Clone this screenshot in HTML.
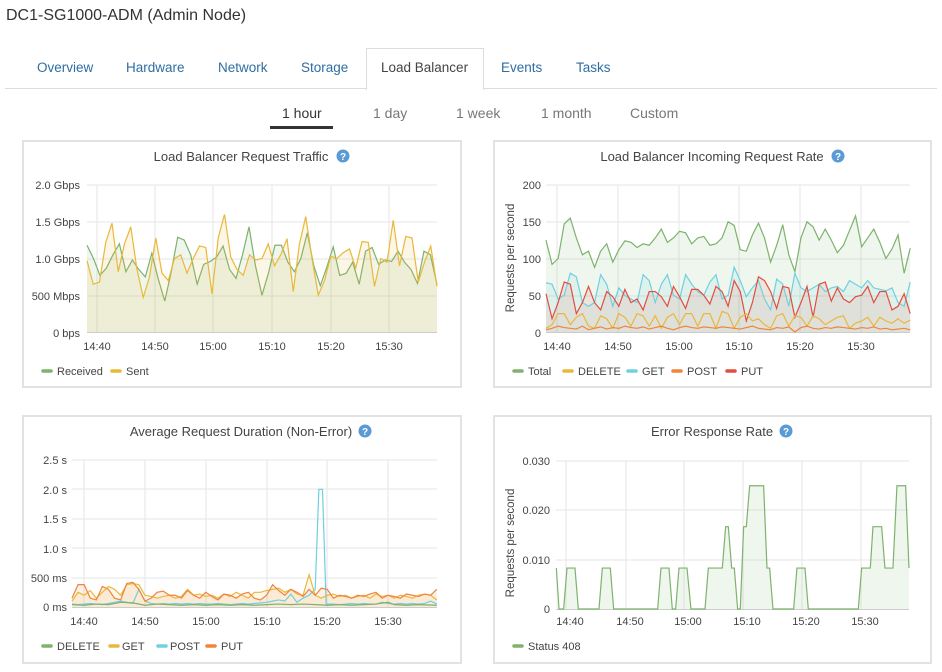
<!DOCTYPE html>
<html><head><meta charset="utf-8"><style>
body{margin:0;width:942px;height:672px;background:#fff;font-family:"Liberation Sans",sans-serif;position:relative;overflow:hidden}
.t{position:absolute;white-space:nowrap}
</style></head><body>
<div class="t" style="left:6px;top:7px;font-size:16px;color:#333">DC1-SG1000-ADM (Admin Node)</div>
<div style="position:absolute;left:5px;top:88px;width:932px;height:1px;background:#ddd"></div>
<div style="position:absolute;left:366px;top:48px;width:116px;height:41px;border:1px solid #ddd;border-bottom:none;background:#fff"></div>
<div class="t" style="left:37px;top:60px;font-size:13.5px;color:#2d6ea3">Overview</div>
<div class="t" style="left:126px;top:60px;font-size:13.5px;color:#2d6ea3">Hardware</div>
<div class="t" style="left:218px;top:60px;font-size:13.5px;color:#2d6ea3">Network</div>
<div class="t" style="left:301px;top:60px;font-size:13.5px;color:#2d6ea3">Storage</div>
<div class="t" style="left:381px;top:60px;font-size:13.5px;color:#444">Load Balancer</div>
<div class="t" style="left:501px;top:60px;font-size:13.5px;color:#2d6ea3">Events</div>
<div class="t" style="left:576px;top:60px;font-size:13.5px;color:#2d6ea3">Tasks</div>
<div class="t" style="left:282px;top:105px;font-size:14px;color:#333">1 hour</div>
<div style="position:absolute;left:270px;top:126px;width:63px;height:3px;background:#333"></div>
<div class="t" style="left:373px;top:105px;font-size:14px;color:#777">1 day</div>
<div class="t" style="left:456px;top:105px;font-size:14px;color:#777">1 week</div>
<div class="t" style="left:541px;top:105px;font-size:14px;color:#777">1 month</div>
<div class="t" style="left:630px;top:105px;font-size:14px;color:#777">Custom</div>

<svg width="942" height="672" style="position:absolute;left:0;top:0" font-family="Liberation Sans, sans-serif">
<g fill="#fff" stroke="#e2e2e2" stroke-width="2">
<rect x="23" y="141" width="438" height="246"/><rect x="494" y="141" width="437" height="246"/>
<rect x="23" y="416" width="438" height="247"/><rect x="494" y="416" width="437" height="247"/>
</g>
<g font-size="13" fill="#444" text-anchor="middle">
<text x="241" y="161">Load Balancer Request Traffic</text>
<text x="712" y="161">Load Balancer Incoming Request Rate</text>
<text x="241" y="436">Average Request Duration (Non-Error)</text>
<text x="712" y="436">Error Response Rate</text>
</g>
<g fill="#5b9bd5"><circle cx="343" cy="156" r="6.5"/><circle cx="838" cy="156" r="6.5"/><circle cx="365" cy="431" r="6.5"/><circle cx="786" cy="431" r="6.5"/></g>
<g fill="#fff" font-size="10" font-weight="bold" text-anchor="middle"><text x="343" y="160">?</text><text x="838" y="160">?</text><text x="365" y="435">?</text><text x="786" y="435">?</text></g>

<g stroke="#e6e6e6" stroke-width="1">
<path d="M87 185H437M87 222H437M87 259H437M87 296H437M97 185V332M155 185V332M213 185V332M272 185V332M331 185V332M389 185V332"/>
<path d="M546 185H910M546 222H910M546 259H910M546 296H910M557 185V332M618 185V332M679 185V332M739 185V332M800 185V332M861 185V332"/>
<path d="M72 460H437M72 489H437M72 519H437M72 548H437M72 578H437M84 460V607M145 460V607M206 460V607M267 460V607M327 460V607M388 460V607"/>
<path d="M556 461H909M556 510H909M556 560H909M566 461V609M626 461V609M684 461V609M743 461V609M802 461V609M861 461V609"/>
</g>
<g stroke="#ccc"><path d="M87 332.5H437M546 332.5H910M72 607.5H437M556 609.5H909"/></g>

<g font-size="11" fill="#444" text-anchor="end">
<text x="80" y="189">2.0 Gbps</text><text x="80" y="226">1.5 Gbps</text><text x="80" y="263">1.0 Gbps</text><text x="80" y="300">500 Mbps</text><text x="80" y="337">0 bps</text>
<text x="541" y="189">200</text><text x="541" y="226">150</text><text x="541" y="263">100</text><text x="541" y="300">50</text><text x="541" y="337">0</text>
<text x="67" y="464">2.5 s</text><text x="67" y="494">2.0 s</text><text x="67" y="523">1.5 s</text><text x="67" y="553">1.0 s</text><text x="67" y="582">500 ms</text><text x="67" y="611">0 ms</text>
<text x="550" y="465">0.030</text><text x="550" y="514">0.020</text><text x="550" y="564">0.010</text><text x="550" y="613">0</text>
</g>
<g font-size="11" fill="#444" text-anchor="middle">
<text x="97" y="350">14:40</text><text x="155" y="350">14:50</text><text x="213" y="350">15:00</text><text x="272" y="350">15:10</text><text x="331" y="350">15:20</text><text x="389" y="350">15:30</text>
<text x="557" y="350">14:40</text><text x="618" y="350">14:50</text><text x="679" y="350">15:00</text><text x="739" y="350">15:10</text><text x="800" y="350">15:20</text><text x="861" y="350">15:30</text>
<text x="84" y="625">14:40</text><text x="145" y="625">14:50</text><text x="206" y="625">15:00</text><text x="267" y="625">15:10</text><text x="327" y="625">15:20</text><text x="388" y="625">15:30</text>
<text x="570" y="625">14:40</text><text x="630" y="625">14:50</text><text x="688" y="625">15:00</text><text x="747" y="625">15:10</text><text x="806" y="625">15:20</text><text x="865" y="625">15:30</text>
</g>
<g font-size="11.5" fill="#444">
<text transform="translate(514,258) rotate(-90)" text-anchor="middle">Requests per second</text>
<text transform="translate(514,543) rotate(-90)" text-anchor="middle">Requests per second</text>
</g>

<g transform="translate(87,332) scale(6.48,-73.5)">
<polygon fill="#7eb26d" fill-opacity="0.12" points="0,0 0,1.18 1,1.0 2,0.77 3,0.87 4,1.05 5,1.2 6,0.82 7,0.98 8,0.85 9,0.75 10,1.07 11,0.72 12,0.42 13,0.82 14,1.29 15,1.25 16,1.05 17,0.65 18,0.92 19,0.96 20,1.02 21,1.17 22,0.85 23,0.73 24,1.05 25,1.43 26,0.9 27,0.5 28,0.8 29,1.18 30,1.18 31,0.95 32,0.82 33,1.0 34,1.35 35,0.9 36,0.63 37,0.88 38,1.16 39,0.77 40,0.8 41,0.95 42,0.65 43,1.1 44,1.15 45,0.92 46,0.98 47,0.96 48,1.1 49,0.95 50,0.85 51,0.66 52,1.1 53,1.05 54,0.65 54,0"/>
<polyline fill="none" stroke="#7eb26d" stroke-width="1.2" vector-effect="non-scaling-stroke" points="0,1.18 1,1.0 2,0.77 3,0.87 4,1.05 5,1.2 6,0.82 7,0.98 8,0.85 9,0.75 10,1.07 11,0.72 12,0.42 13,0.82 14,1.29 15,1.25 16,1.05 17,0.65 18,0.92 19,0.96 20,1.02 21,1.17 22,0.85 23,0.73 24,1.05 25,1.43 26,0.9 27,0.5 28,0.8 29,1.18 30,1.18 31,0.95 32,0.82 33,1.0 34,1.35 35,0.9 36,0.63 37,0.88 38,1.16 39,0.77 40,0.8 41,0.95 42,0.65 43,1.1 44,1.15 45,0.92 46,0.98 47,0.96 48,1.1 49,0.95 50,0.85 51,0.66 52,1.1 53,1.05 54,0.65"/>
</g>
<g transform="translate(87,332) scale(6.25,-73.5)">
<polygon fill="#eab839" fill-opacity="0.12" points="0,0 0,0.97 1,0.65 2,0.68 3,1.22 4,1.48 5,0.82 6,1.2 7,1.43 8,0.85 9,0.47 10,0.75 11,1.28 12,0.8 13,0.7 14,1.0 15,1.05 16,0.8 17,1.0 18,1.17 19,1.15 20,0.52 21,1.28 22,1.6 23,1.02 24,0.85 25,0.77 26,1.05 27,0.98 28,1.0 29,1.2 30,0.9 31,1.05 32,1.27 33,0.55 34,1.2 35,1.57 36,1.0 37,0.5 38,0.7 39,1.03 40,1.0 41,1.08 42,1.13 43,0.87 44,1.23 45,1.22 46,0.62 47,1.0 48,0.95 49,1.52 50,0.9 51,1.3 52,1.28 53,0.68 54,0.95 55,1.17 56,0.62 56,0"/>
<polyline fill="none" stroke="#eab839" stroke-width="1.2" vector-effect="non-scaling-stroke" points="0,0.97 1,0.65 2,0.68 3,1.22 4,1.48 5,0.82 6,1.2 7,1.43 8,0.85 9,0.47 10,0.75 11,1.28 12,0.8 13,0.7 14,1.0 15,1.05 16,0.8 17,1.0 18,1.17 19,1.15 20,0.52 21,1.28 22,1.6 23,1.02 24,0.85 25,0.77 26,1.05 27,0.98 28,1.0 29,1.2 30,0.9 31,1.05 32,1.27 33,0.55 34,1.2 35,1.57 36,1.0 37,0.5 38,0.7 39,1.03 40,1.0 41,1.08 42,1.13 43,0.87 44,1.23 45,1.22 46,0.62 47,1.0 48,0.95 49,1.52 50,0.9 51,1.3 52,1.28 53,0.68 54,0.95 55,1.17 56,0.62"/>
</g>

<g transform="translate(546,332) scale(6.07,-0.735)">
<polygon fill="#7eb26d" fill-opacity="0.12" points="0,0 0,125 1,92 2,100 3,147 4,155 5,128 6,105 7,110 8,88 9,110 10,120 11,95 12,112 13,124 14,122 15,115 16,120 17,118 18,128 19,140 20,122 21,128 22,137 23,135 24,120 25,128 26,130 27,118 28,120 29,128 30,150 31,145 32,112 33,110 34,132 35,148 36,128 37,95 38,118 39,146 40,105 41,82 42,128 43,150 44,143 45,125 46,140 47,125 48,108 49,118 50,138 51,158 52,116 53,128 54,140 55,122 56,100 57,113 58,132 59,80 60,114 60,0"/>
<polygon fill="#6ed0e0" fill-opacity="0.12" points="0,0 0,67 1,65 2,45 3,50 4,80 5,75 6,40 7,35 8,40 9,78 10,65 11,35 12,60 13,50 14,45 15,40 16,78 17,70 18,40 19,65 20,78 21,50 22,45 23,78 24,65 25,55 26,50 27,68 28,78 29,45 30,50 31,88 32,70 33,48 34,60 35,70 36,45 37,30 38,72 39,65 40,35 41,80 42,60 43,55 44,60 45,65 46,55 47,60 48,62 49,55 50,70 51,65 52,60 53,70 54,60 55,58 56,56 57,60 58,40 59,35 60,68 60,0"/>
<polygon fill="#e24d42" fill-opacity="0.1" points="0,0 0,52 1,18 2,40 3,68 4,65 5,25 6,40 7,62 8,40 9,30 10,55 11,48 12,35 13,58 14,40 15,45 16,30 17,55 18,55 19,48 20,35 21,62 22,48 23,32 24,58 25,58 26,50 27,38 28,62 29,55 30,35 31,70 32,55 33,15 34,40 35,75 36,70 37,55 38,32 39,62 40,60 41,20 42,40 43,62 44,20 45,65 46,68 47,42 48,60 49,45 50,40 51,48 52,50 53,62 54,40 55,55 56,55 57,30 58,35 59,52 60,25 60,0"/>
<polyline fill="none" stroke="#7eb26d" stroke-width="1.2" vector-effect="non-scaling-stroke" points="0,125 1,92 2,100 3,147 4,155 5,128 6,105 7,110 8,88 9,110 10,120 11,95 12,112 13,124 14,122 15,115 16,120 17,118 18,128 19,140 20,122 21,128 22,137 23,135 24,120 25,128 26,130 27,118 28,120 29,128 30,150 31,145 32,112 33,110 34,132 35,148 36,128 37,95 38,118 39,146 40,105 41,82 42,128 43,150 44,143 45,125 46,140 47,125 48,108 49,118 50,138 51,158 52,116 53,128 54,140 55,122 56,100 57,113 58,132 59,80 60,114"/>
<polyline fill="none" stroke="#6ed0e0" stroke-width="1.2" vector-effect="non-scaling-stroke" points="0,67 1,65 2,45 3,50 4,80 5,75 6,40 7,35 8,40 9,78 10,65 11,35 12,60 13,50 14,45 15,40 16,78 17,70 18,40 19,65 20,78 21,50 22,45 23,78 24,65 25,55 26,50 27,68 28,78 29,45 30,50 31,88 32,70 33,48 34,60 35,70 36,45 37,30 38,72 39,65 40,35 41,80 42,60 43,55 44,60 45,65 46,55 47,60 48,62 49,55 50,70 51,65 52,60 53,70 54,60 55,58 56,56 57,60 58,40 59,35 60,68"/>
<polyline fill="none" stroke="#e24d42" stroke-width="1.2" vector-effect="non-scaling-stroke" points="0,52 1,18 2,40 3,68 4,65 5,25 6,40 7,62 8,40 9,30 10,55 11,48 12,35 13,58 14,40 15,45 16,30 17,55 18,55 19,48 20,35 21,62 22,48 23,32 24,58 25,58 26,50 27,38 28,62 29,55 30,35 31,70 32,55 33,15 34,40 35,75 36,70 37,55 38,32 39,62 40,60 41,20 42,40 43,62 44,20 45,65 46,68 47,42 48,60 49,45 50,40 51,48 52,50 53,62 54,40 55,55 56,55 57,30 58,35 59,52 60,25"/>
<polyline fill="none" stroke="#eab839" stroke-width="1.2" vector-effect="non-scaling-stroke" points="0,5 1,10 2,25 3,25 4,10 5,20 6,25 7,8 8,5 9,22 10,18 11,5 12,25 13,20 14,8 15,25 16,22 17,8 18,22 19,5 20,20 21,25 22,10 23,25 24,25 25,8 26,25 27,25 28,5 29,28 30,25 31,5 32,20 33,25 34,15 35,18 36,10 37,5 38,22 39,25 40,8 41,22 42,20 43,8 44,22 45,18 46,10 47,15 48,20 49,22 50,5 51,12 52,15 53,20 54,8 55,20 56,15 57,12 58,18 59,12 60,16"/>
<polyline fill="none" stroke="#ef843c" stroke-width="1.2" vector-effect="non-scaling-stroke" points="0,3 1,5 2,8 3,6 4,5 5,4 6,8 7,3 8,5 9,7 10,4 11,6 12,5 13,8 14,6 15,5 16,7 17,4 18,6 19,8 20,5 21,3 22,6 23,8 24,6 25,5 26,7 27,6 28,5 29,7 30,6 31,5 32,4 33,6 34,8 35,5 36,4 37,3 38,6 39,5 40,7 41,0 42,6 43,8 44,5 45,4 46,6 47,5 48,7 49,6 50,5 51,4 52,6 53,5 54,7 55,4 56,5 57,3 58,4 59,5 60,3"/>
</g>

<g transform="translate(72,607) scale(6.08,-58.8)">
<polygon fill="#ef843c" fill-opacity="0.12" points="0,0 0,0.15 1,0.38 2,0.38 3,0.15 4,0.12 5,0.35 6,0.3 7,0.15 8,0.12 9,0.4 10,0.42 11,0.3 12,0.1 13,0.15 14,0.25 15,0.27 16,0.2 17,0.2 18,0.15 19,0.28 20,0.2 21,0.15 22,0.25 23,0.18 24,0.12 25,0.22 26,0.2 27,0.15 28,0.22 29,0.25 30,0.15 31,0.12 32,0.2 33,0.38 34,0.28 35,0.2 36,0.3 37,0.25 38,0.18 39,0.3 40,0.2 41,0.32 42,0.3 43,0.15 44,0.2 45,0.18 46,0.15 47,0.2 48,0.18 49,0.22 50,0.25 51,0.15 52,0.2 53,0.18 54,0.15 55,0.22 56,0.2 57,0.18 58,0.22 59,0.2 60,0.3 60,0"/>
<polygon fill="#eab839" fill-opacity="0.1" points="0,0 0,0.1 1,0.25 2,0.2 3,0.28 4,0.15 5,0.25 6,0.35 7,0.3 8,0.2 9,0.38 10,0.4 11,0.38 12,0.2 13,0.18 14,0.15 15,0.18 16,0.2 17,0.15 18,0.18 19,0.3 20,0.2 21,0.22 22,0.18 23,0.2 24,0.15 25,0.22 26,0.18 27,0.25 28,0.2 29,0.15 30,0.25 31,0.25 32,0.28 33,0.3 34,0.32 35,0.25 36,0.3 37,0.22 38,0.2 39,0.55 40,0.2 41,0.15 42,0.2 43,0.22 44,0.18 45,0.2 46,0.15 47,0.18 48,0.2 49,0.15 50,0.22 51,0.18 52,0.2 53,0.15 54,0.2 55,0.18 56,0.15 57,0.2 58,0.22 59,0.2 60,0.12 60,0"/>
<polyline fill="none" stroke="#6ed0e0" stroke-width="1.2" vector-effect="non-scaling-stroke" points="0,0.05 1,0.04 2,0.05 3,0.06 4,0.05 5,0.04 6,0.06 7,0.08 8,0.1 9,0.08 10,0.06 11,0.3 12,0.1 13,0.06 14,0.05 15,0.06 16,0.05 17,0.06 18,0.05 19,0.06 20,0.05 21,0.06 22,0.05 23,0.05 24,0.06 25,0.05 26,0.04 27,0.05 28,0.06 29,0.05 30,0.06 31,0.07 32,0.08 33,0.1 34,0.12 35,0.1 36,0.22 37,0.08 38,0.15 39,0.2 40,0.3 40.6,2.0 41.2,2.0 41.8,0.05 43,0.05 44,0.04 45,0.05 46,0.06 47,0.05 48,0.06 49,0.05 50,0.05 51,0.08 52,0.06 53,0.05 54,0.06 55,0.05 56,0.06 57,0.05 58,0.06 59,0.1 60,0.05"/>
<polyline fill="none" stroke="#eab839" stroke-width="1.2" vector-effect="non-scaling-stroke" points="0,0.1 1,0.25 2,0.2 3,0.28 4,0.15 5,0.25 6,0.35 7,0.3 8,0.2 9,0.38 10,0.4 11,0.38 12,0.2 13,0.18 14,0.15 15,0.18 16,0.2 17,0.15 18,0.18 19,0.3 20,0.2 21,0.22 22,0.18 23,0.2 24,0.15 25,0.22 26,0.18 27,0.25 28,0.2 29,0.15 30,0.25 31,0.25 32,0.28 33,0.3 34,0.32 35,0.25 36,0.3 37,0.22 38,0.2 39,0.55 40,0.2 41,0.15 42,0.2 43,0.22 44,0.18 45,0.2 46,0.15 47,0.18 48,0.2 49,0.15 50,0.22 51,0.18 52,0.2 53,0.15 54,0.2 55,0.18 56,0.15 57,0.2 58,0.22 59,0.2 60,0.12"/>
<polyline fill="none" stroke="#ef843c" stroke-width="1.2" vector-effect="non-scaling-stroke" points="0,0.15 1,0.38 2,0.38 3,0.15 4,0.12 5,0.35 6,0.3 7,0.15 8,0.12 9,0.4 10,0.42 11,0.3 12,0.1 13,0.15 14,0.25 15,0.27 16,0.2 17,0.2 18,0.15 19,0.28 20,0.2 21,0.15 22,0.25 23,0.18 24,0.12 25,0.22 26,0.2 27,0.15 28,0.22 29,0.25 30,0.15 31,0.12 32,0.2 33,0.38 34,0.28 35,0.2 36,0.3 37,0.25 38,0.18 39,0.3 40,0.2 41,0.32 42,0.3 43,0.15 44,0.2 45,0.18 46,0.15 47,0.2 48,0.18 49,0.22 50,0.25 51,0.15 52,0.2 53,0.18 54,0.15 55,0.22 56,0.2 57,0.18 58,0.22 59,0.2 60,0.3"/>
<polyline fill="none" stroke="#7eb26d" stroke-width="1.2" vector-effect="non-scaling-stroke" points="0,0.04 2,0.03 4,0.05 6,0.04 8,0.08 10,0.07 12,0.03 14,0.05 16,0.04 18,0.03 20,0.04 22,0.03 24,0.04 26,0.03 28,0.04 30,0.03 32,0.04 34,0.05 36,0.04 38,0.05 40,0.04 42,0.03 44,0.04 46,0.03 48,0.04 50,0.05 52,0.08 53,0.04 55,0.03 57,0.04 60,0.03"/>
</g>

<g transform="translate(493,609) scale(0.3333,-4.93)">
<polygon fill="#7eb26d" fill-opacity="0.12" points="190,0 190,8.3 198,0 212,0 222,8.3 246,8.3 256,0 318,0 328,8.3 352,8.3 362,0 494,0 504,8.3 528,8.3 538,0 548,0 558,8.3 582,8.3 594,0 636,0 646,8.3 688,8.3 698,16.7 706,16.7 716,8.3 724,8.3 734,0 742,0 752,16.7 760,16.7 770,25 812,25 822,8.3 830,8.3 840,0 902,0 912,8.3 936,8.3 946,0 1096,0 1106,8.3 1132,8.3 1140,16.7 1166,16.7 1176,8.3 1200,8.3 1212,25 1238,25 1248,8.3 1248,0"/>
<polyline fill="none" stroke="#7eb26d" stroke-width="1.2" vector-effect="non-scaling-stroke" points="190,8.3 198,0 212,0 222,8.3 246,8.3 256,0 318,0 328,8.3 352,8.3 362,0 494,0 504,8.3 528,8.3 538,0 548,0 558,8.3 582,8.3 594,0 636,0 646,8.3 688,8.3 698,16.7 706,16.7 716,8.3 724,8.3 734,0 742,0 752,16.7 760,16.7 770,25 812,25 822,8.3 830,8.3 840,0 902,0 912,8.3 936,8.3 946,0 1096,0 1106,8.3 1132,8.3 1140,16.7 1166,16.7 1176,8.3 1200,8.3 1212,25 1238,25 1248,8.3"/>
</g>

<g stroke-width="3.5" stroke-linecap="round">
<path d="M43 371H51" stroke="#7eb26d"/><path d="M112 371H120" stroke="#eab839"/>
<path d="M514 371H522" stroke="#7eb26d"/><path d="M564 371H572" stroke="#eab839"/><path d="M628 371H636" stroke="#6ed0e0"/><path d="M673 371H681" stroke="#ef843c"/><path d="M727 371H735" stroke="#e24d42"/>
<path d="M43 646H51" stroke="#7eb26d"/><path d="M110 646H118" stroke="#eab839"/><path d="M158 646H166" stroke="#6ed0e0"/><path d="M207 646H215" stroke="#ef843c"/>
<path d="M514 646H522" stroke="#7eb26d"/>
</g>
<g font-size="11" fill="#444">
<text x="57" y="375">Received</text><text x="126" y="375">Sent</text>
<text x="528" y="375">Total</text><text x="578" y="375">DELETE</text><text x="642" y="375">GET</text><text x="687" y="375">POST</text><text x="741" y="375">PUT</text>
<text x="57" y="650">DELETE</text><text x="122" y="650">GET</text><text x="170" y="650">POST</text><text x="221" y="650">PUT</text>
<text x="528" y="650">Status 408</text>
</g>
</svg>
</body></html>
